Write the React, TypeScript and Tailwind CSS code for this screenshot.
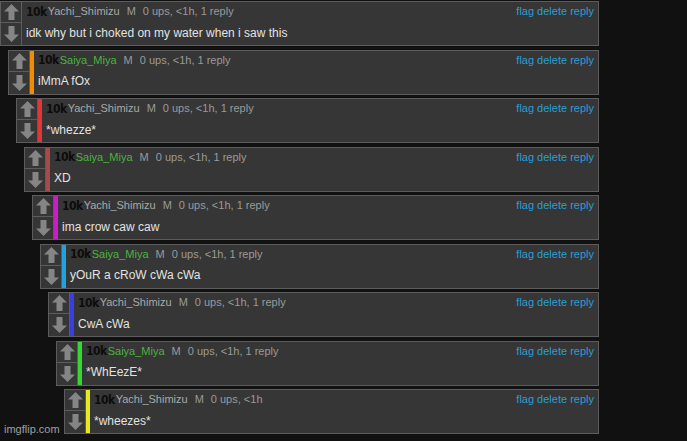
const comments = [
  { user: "Yachi_Shimizu", green: false, text: "idk why but i choked on my water when i saw this", bar: "", reply: true },
  { user: "Saiya_Miya", green: true, text: "iMmA fOx", bar: "bg-[#f28c00]", reply: true },
  { user: "Yachi_Shimizu", green: false, text: "*whezze*", bar: "bg-[#e33535]", reply: true },
  { user: "Saiya_Miya", green: true, text: "XD", bar: "bg-[#a54b4b]", reply: true },
  { user: "Yachi_Shimizu", green: false, text: "ima crow caw caw", bar: "bg-[#c81ec8]", reply: true },
  { user: "Saiya_Miya", green: true, text: "yOuR a cRoW cWa cWa", bar: "bg-[#1fa3e0]", reply: true },
  { user: "Yachi_Shimizu", green: false, text: "CwA cWa", bar: "bg-[#3a3ee0]", reply: true },
  { user: "Saiya_Miya", green: true, text: "*WhEezE*", bar: "bg-[#34d834]", reply: true },
  { user: "Yachi_Shimizu", green: false, text: "*wheezes*", bar: "bg-[#e8e820]", reply: false },
];

const indents = [
  "ml-0",
  "ml-[8px]",
  "ml-[16px]",
  "ml-[24px]",
  "ml-[32px]",
  "ml-[40px]",
  "ml-[48px]",
  "ml-[56px]",
  "ml-[64px]",
];

function Arrow({ down }: { down?: boolean }) {
  return (
    <svg width="15" height="16" viewBox="0 0 15 16" className={down ? "rotate-180" : ""}>
      <path d="M7.5 0 L15 7.5 L10.5 7.5 L10.5 16 L4.5 16 L4.5 7.5 L0 7.5 Z" fill="#858585" />
    </svg>
  );
}

function Comment({ c, depth }: { c: (typeof comments)[number]; depth: number }) {
  return (
    <div className={`${indents[depth]} flex h-[45px] border border-[#5c5c5c] bg-[#363636]`}>
      {/* vote buttons */}
      <div className="flex w-[21px] shrink-0 flex-col border-r border-[#5c5c5c]">
        <div className="flex h-[21px] items-center justify-center border-b border-[#5c5c5c]">
          <Arrow />
        </div>
        <div className="flex flex-1 items-center justify-center">
          <Arrow down />
        </div>
      </div>
      {c.bar && <div className={`w-[4px] shrink-0 ${c.bar}`} />}

      <div className="flex min-w-0 flex-1 flex-col pl-[4px] pr-[4px]">
        <div className="flex h-[19px] items-center text-[11px] leading-none">
          <span className="mr-[1px] font-['DejaVu_Sans_Condensed',sans-serif] text-[12px] font-bold tracking-[-0.5px] text-[#0c0c0c]">
            10k
          </span>
          <span className={c.green ? "text-[#4bb33e]" : "text-[#a8a8a8]"}>{c.user}</span>
          <span className="ml-[7px] text-[#9a9a9a]">M</span>
          <span className="ml-[7px] text-[#9a9a9a]">
            0 ups, &lt;1h{c.reply ? ", 1 reply" : ""}
          </span>
          <span className="ml-auto text-[#2a9fd0]">flag delete reply</span>
        </div>
        <div className="flex h-[23px] items-center text-[12px] leading-none text-[#e2e2e2]">
          {c.text}
        </div>
      </div>
    </div>
  );
}

export default function App() {
  return (
    <div className="relative h-[441px] w-[687px] overflow-hidden bg-[#111111] font-['Liberation_Sans',Arial,sans-serif]">
      <div className="flex w-[599px] flex-col gap-[3.5px] pt-[1px]">
        {comments.map((c, i) => (
          <Comment key={i} c={c} depth={i} />
        ))}
      </div>
      {/* watermark */}
      <div className="absolute bottom-[4px] left-[4px] text-[11px] text-[#a0a0a0]">imgflip.com</div>
    </div>
  );
}
